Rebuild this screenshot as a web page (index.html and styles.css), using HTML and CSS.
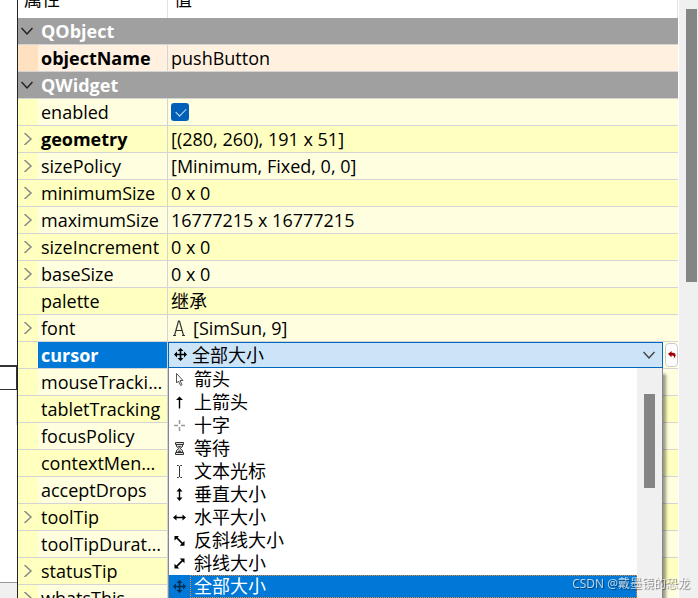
FILE: index.html
```html
<!DOCTYPE html>
<html lang="zh-CN">
<head>
<meta charset="utf-8">
<title>属性编辑器</title>
<link rel="stylesheet" href="styles.css">
</head>
<body>
<svg class="defs" aria-hidden="true">
  <symbol id="down" viewBox="0 0 12 12"><path d="M0.5 3l5.5 6 5.5-6" fill="none" stroke="currentColor" stroke-width="1.5"/></symbol>
  <symbol id="right" viewBox="0 0 12 12"><path d="M2.500 0l6.500 6-6.500 6" fill="none" stroke="currentColor" stroke-width="1.500"/></symbol>
  <symbol id="all" viewBox="0 0 13 13"><path d="M6.5 0L9.500 3H7.300v2.700H10V3.500L13 6.500 10 9.500V7.300H7.300V10h2.200l-3 3-3-3h2.200V7.300H3v2.200L0 6.500l3-3v2.200h2.700V3H3.500z" fill="currentColor"/></symbol>
</svg>
<main class="window">
  <aside class="canvas" aria-hidden="true">
    <div class="canvas-top"></div>
    <div class="canvas-box"></div>
    <div class="canvas-edge"></div>
    <div class="canvas-rest"></div>
    <div class="canvas-status"></div>
  </aside>
  <section class="editor">
    <table class="props">
      <colgroup><col class="c-mark"><col class="c-name"><col></colgroup>
      <thead><tr><th colspan="2">属性</th><th>值</th></tr></thead>
      <tbody>
        <tr class="group"><td><svg><use href="#down"/></svg></td><th colspan="2">QObject</th></tr>
        <tr class="peach changed"><td></td><th>objectName</th><td>pushButton</td></tr>
        <tr class="group"><td><svg><use href="#down"/></svg></td><th colspan="2">QWidget</th></tr>
        <tr class="light"><td></td><th><label for="enabled">enabled</label></th><td><input type="checkbox" id="enabled" checked></td></tr>
        <tr class="changed"><td><svg><use href="#right"/></svg></td><th>geometry</th><td>[(280, 260), 191 x 51]</td></tr>
        <tr class="light"><td><svg><use href="#right"/></svg></td><th>sizePolicy</th><td>[Minimum, Fixed, 0, 0]</td></tr>
        <tr><td><svg><use href="#right"/></svg></td><th>minimumSize</th><td>0 x 0</td></tr>
        <tr class="light"><td><svg><use href="#right"/></svg></td><th>maximumSize</th><td>16777215 x 16777215</td></tr>
        <tr><td><svg><use href="#right"/></svg></td><th>sizeIncrement</th><td>0 x 0</td></tr>
        <tr class="light"><td><svg><use href="#right"/></svg></td><th>baseSize</th><td>0 x 0</td></tr>
        <tr><td></td><th>palette</th><td>继承</td></tr>
        <tr class="light"><td><svg><use href="#right"/></svg></td><th>font</th><td><div class="font-value"><svg class="glyph" viewBox="0 0 16 16"><path d="M3.500 15.500L7.500 1 8.500 1 12.500 15.500M4.500 10.500h7M2 15.500h3M11 15.500h3" fill="none" stroke="#333" stroke-width="1.200"/></svg>[SimSun, 9]</div></td></tr>
        <tr class="current changed"><td></td><th><label for="cursor">cursor</label></th>
          <td>
            <div class="edit">
              <div class="combo">
                <svg class="combo-icon"><use href="#all"/></svg>
                <select id="cursor"><option>全部大小</option></select>
                <svg class="combo-arrow"><use href="#down"/></svg>
                <div class="popup">
                  <ul role="listbox" aria-label="cursor">
                    <li role="option"><svg viewBox="0 0 13 13"><path d="M3.500 0.500v9.500l2-2 2 4.500 1.500-.7-2-4.300h3z" fill="#fff" stroke="#555"/></svg><span>箭头</span></li>
                    <li role="option"><svg viewBox="0 0 13 13"><path d="M6.500 0.500L10 4H7.200v8.500H5.800V4H3z"/></svg><span>上箭头</span></li>
                    <li role="option"><svg viewBox="0 0 13 13"><path d="M6.500 1v4M6.500 8v4M1 6.500h4M8 6.500h4" stroke="#999" stroke-width="1.500"/></svg><span>十字</span></li>
                    <li role="option"><svg viewBox="0 0 13 13"><path d="M2.500 .5h8v2h-8zM2.500 10.500h8v2h-8zM3.500 2.500v2L5.800 6.500 3.500 8.500v2h6v-2L7.200 6.500l2.300-2v-2z" fill="#ddd" stroke="#333"/><path d="M4.500 4h4l-2 2zM4.500 10l2-2 2 2z" fill="#444"/></svg><span>等待</span></li>
                    <li role="option"><svg viewBox="0 0 13 13"><path d="M4 .5h1.500l1 1 1-1H9M6.500 1v11M4 12.500h1.500l1-1 1 1H9" fill="none" stroke="#333"/></svg><span>文本光标</span></li>
                    <li role="option"><svg viewBox="0 0 13 13"><path d="M6.500 0L9.500 3.500H7.200v6h2.300L6.500 13l-3-3.500h2.300v-6H3.500z"/></svg><span>垂直大小</span></li>
                    <li role="option"><svg viewBox="0 0 13 13"><path d="M0 6.500L3.500 3.500v2.300h6V3.500L13 6.500l-3.500 3V7.200h-6v2.300z"/></svg><span>水平大小</span></li>
                    <li role="option"><svg viewBox="0 0 13 13"><path d="M1.500 2h4.500L4.600 3.600l5 5L11.500 7v4.800H6.700L8.500 9.700l-5-5L1.500 6.500z"/></svg><span>反斜线大小</span></li>
                    <li role="option"><svg viewBox="0 0 13 13"><path d="M11.500 1.500v4.800L9.700 4.500l-5.200 5.200L6.300 11.500H1.500V6.700l1.800 1.800 5.200-5.200L6.700 1.500z"/></svg><span>斜线大小</span></li>
                    <li role="option" aria-selected="true"><svg class="navy"><use href="#all"/></svg><span>全部大小</span></li>
                  </ul>
                  <div class="popup-bar"><div class="popup-thumb"></div></div>
                </div>
              </div>
              <button class="reset" type="button" aria-label="重置"><svg viewBox="0 0 9 9"><path d="M0 3.500L4 0v2h1.500Q9 2.500 8.500 5.500L6.500 9Q7.500 5.500 5.500 5H4v2z" fill="#a00000"/></svg></button>
            </div>
          </td></tr>
        <tr class="light"><td></td><th>mouseTracking</th><td></td></tr>
        <tr><td></td><th class="fit">tabletTracking</th><td></td></tr>
        <tr class="light"><td></td><th>focusPolicy</th><td></td></tr>
        <tr><td></td><th>contextMenuPolicy</th><td></td></tr>
        <tr class="light"><td></td><th>acceptDrops</th><td></td></tr>
        <tr><td><svg><use href="#right"/></svg></td><th>toolTip</th><td></td></tr>
        <tr class="light"><td></td><th>toolTipDuration</th><td></td></tr>
        <tr><td><svg><use href="#right"/></svg></td><th>statusTip</th><td></td></tr>
        <tr class="light"><td><svg><use href="#right"/></svg></td><th>whatsThis</th><td></td></tr>
      </tbody>
    </table>
  </section>
  <div class="scrollbar"><div class="thumb"></div></div>
</main>
<div class="watermark">CSDN @戴墨镜的恐龙</div>
</body>
</html>
```
FILE: styles.css
```css
* { box-sizing: border-box; }

body {
  margin: 0;
  height: 100vh;
  overflow: hidden;
  background: #fff;
  color: #000;
  font: 18px/26px "Open Sans", "Noto Sans CJK SC", sans-serif;
}

.defs { position: absolute; width: 0; height: 0; }

.window { display: flex; height: 100%; }

/* Sliver of the form canvas beside the dock */
.canvas {
  display: flex;
  flex-direction: column;
  flex: none;
  width: 18px;
  border-right: 1px solid #222;
}
.canvas-top { height: 365px; }
.canvas-box { height: 25px; border: solid #333; border-width: 2px 1px 1px 0; }
.canvas-edge { height: 35px; border-right: 1px solid #ddd; }
.canvas-rest { flex: 1; }
.canvas-status { height: 16px; background: #f0f0f0; border-top: 1px solid #999; }

.editor { flex: 1; min-width: 0; height: 100%; }

.props {
  width: 100%;
  margin-top: -20px;
  border-collapse: separate;
  border-spacing: 0;
  table-layout: fixed;
}
.c-mark { width: 20px; }
.c-name { width: 130px; }

.props th, .props td {
  height: 27px;
  padding: 0 3px;
  border-bottom: 1px solid #d4d4d4;
  background: #ffffbf;
  text-align: left;
  font-weight: 400;
  white-space: nowrap;
}
.props tbody th {
  overflow: hidden;
  text-overflow: ellipsis;
  border-right: 1px solid #d4d4d4;
}
.props tbody th.fit { padding-right: 0; text-overflow: clip; }
.props td:first-child { padding: 0 0 0 4px; color: #888; }
.props td:first-child svg { display: block; width: 12px; height: 12px; }

.props thead th {
  height: 38px;
  padding: 0 6px;
  background: #fff;
  border-bottom: 0;
  border-right: 1px solid #e2e2e2;
}

.props .light th, .props .light td { background: #ffffdf; }
.props .light td:first-child { background: #ffffbf; }
.props .peach th, .props .peach td { background: #fff0df; }
.props .peach td:first-child { background: #ffe1bf; }
.props .group th, .props .group td { background: #a0a0a0; }
.props .group th { color: #fff; font-weight: 700; border-right: 0; }
.props .group td:first-child { padding-left: 3px; color: #222; }
.props .changed th { font-weight: 700; }
.props .current th { background: #0078d7; color: #fff; }
.props .current td:last-child { padding: 0; background: #ffffdf; }

#enabled {
  display: block;
  appearance: none;
  width: 18px;
  height: 18px;
  margin: 0;
  border-radius: 3px;
  background: #005fb8;
}
#enabled::before {
  content: "";
  display: block;
  width: 9px;
  height: 5px;
  margin: 6px 5px;
  border: solid #cfe2f5;
  border-width: 0 0 1px 1px;
  rotate: -45deg;
  translate: 0 -1px;
}

.font-value { display: flex; align-items: center; gap: 6px; }
.glyph { width: 16px; height: 16px; }

.edit { display: flex; align-items: center; gap: 2px; height: 26px; }
.combo { position: relative; flex: 1; height: 26px; }
.combo select {
  display: block;
  appearance: none;
  width: 100%;
  height: 26px;
  padding: 0 23px;
  border: 1px solid #0067c0;
  border-radius: 0;
  background: #cce4f7;
  color: #000;
  font: inherit;
  line-height: 24px;
}
.combo-icon { position: absolute; left: 6px; top: 6px; width: 13px; height: 13px; }
.combo-arrow { position: absolute; right: 8px; top: 7px; width: 12px; height: 12px; color: #444; }

.reset {
  display: grid;
  place-items: center;
  width: 13px;
  height: 24px;
  padding: 0;
  border: 1px solid #ccc;
  border-radius: 4px;
  background: #fdfdfd;
}
.reset svg { width: 8px; height: 8px; }

.popup {
  position: absolute;
  z-index: 1;
  top: 100%;
  left: 0;
  right: 0;
  display: flex;
  border: solid #838791;
  border-width: 0 1px;
  background: #fff;
  box-shadow: 3px 6px 3px rgb(0 0 0 / 40%);
}
.popup ul { flex: 1; margin: 0; padding: 0; list-style: none; }
.popup li { display: flex; align-items: center; height: 23px; padding-left: 4px; line-height: 21px; }
.popup li svg { flex: none; width: 13px; height: 13px; margin-right: 4px; }
.popup li span { flex: 1; padding-left: 3px; border: 1px solid transparent; }
.popup li[aria-selected] { background: #0078d7; color: #fff; }
.popup li[aria-selected] span { border: 1px dotted #f08a30; }
.popup .navy { color: #002c50; }
.popup-bar { width: 25px; padding: 26px 7px 0; background: #f0f0f0; }
.popup-thumb { height: 94px; background: #858585; }

.scrollbar {
  flex: none;
  width: 20px;
  padding: 9px 1px 0 7px;
  border-left: 1px solid #fff;
  background: #f0f0f0;
}
.thumb { height: 273px; background: #858585; }

.watermark {
  position: fixed;
  z-index: 2;
  right: 8px;
  bottom: 4px;
  color: rgb(255 255 255 / 75%);
  font: 12px/20px "Open Sans", "Noto Sans CJK SC", sans-serif;
  text-shadow: 1px 1px 1px rgb(0 0 0 / 50%);
}
```
